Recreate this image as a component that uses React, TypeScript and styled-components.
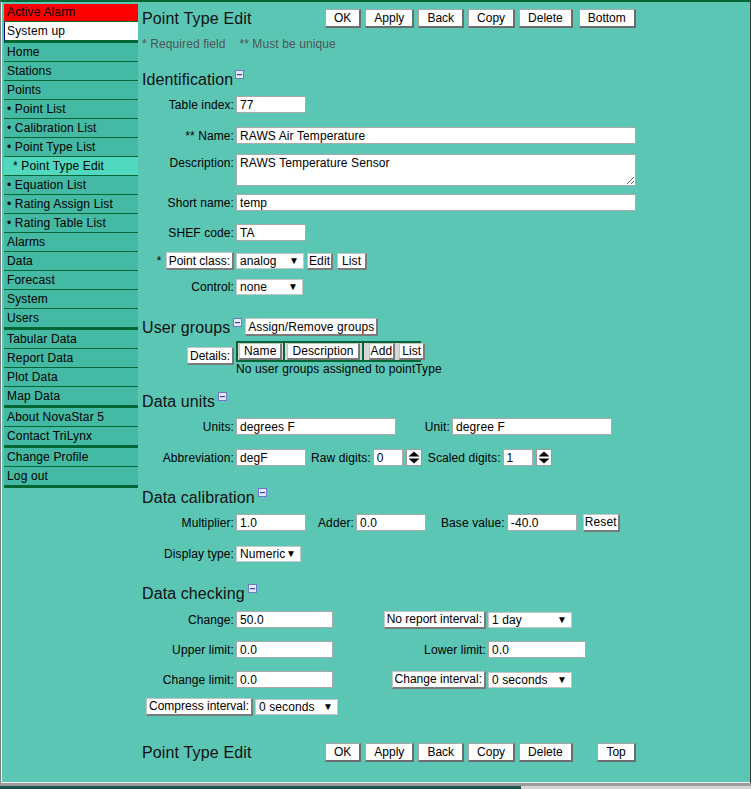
import React from "react";
import styled, { createGlobalStyle } from "styled-components";

const C = {
  main: "#5cc6b5",
  side: "#44b9a3",
  hi: "#50d9be",
  dark: "#006633",
};

const Global = createGlobalStyle`
  html, body { margin: 0; padding: 0; background: #1d4f4c; }
  body { font-family: "Liberation Sans", Arial, sans-serif; font-size: 12px; color: #000; }
  * { box-sizing: border-box; }
`;

const Screen = styled.div`
  width: 751px;
  height: 789px;
  display: flex;
  flex-direction: column;
  overflow: hidden;
`;

const Frame = styled.div`
  width: 751px;
  height: 783px;
  flex-shrink: 0;
  background: ${C.main};
  border-top: 2px solid ${C.dark};
  border-left: 1px solid #7d7d7d;
  border-right: 1px solid #3d3d3d;
  box-shadow: inset 1px 0 0 #f2f2f2, inset 0 -1px 0 #f0f0f0;
  padding: 2px 0 0 3px;
  display: flex;
  align-items: flex-start;
`;

const ScrollBar = styled.div`
  height: 6px;
  border-top: 3px solid #9b9b9b;
  display: flex;
`;

const ScrollThumb = styled.div`
  width: 521px;
  background: #1e5350;
`;

const ScrollTrack = styled.div`
  flex: 1;
  background: #d4d4d4;
`;

/* ---------- Sidebar ---------- */

const Sidebar = styled.nav`
  width: 134px;
  flex-shrink: 0;
  display: flex;
  flex-direction: column;
`;

const AlarmBox = styled.div`
  height: 18px;
  line-height: 17px;
  background: #ff0000;
  border-bottom: 1px solid ${C.dark};
  padding-left: 3px;
  letter-spacing: 0.15px;
`;

const StatusBox = styled.div`
  height: 21px;
  line-height: 18px;
  background: #ffffff;
  border-left: 1px solid #00007a;
  border-bottom: 3px solid ${C.dark};
  padding-left: 2px;
  letter-spacing: 0.15px;
`;

const NavItem = styled.div<{ $thick?: boolean; $active?: boolean; $indent?: number }>`
  height: ${(p) => (p.$thick ? 21 : 19)}px;
  line-height: 18px;
  padding-left: ${(p) => 3 + (p.$indent ?? 0)}px;
  background: ${(p) => (p.$active ? C.hi : C.side)};
  border-bottom: ${(p) => (p.$thick ? 3 : 1)}px solid ${C.dark};
  white-space: nowrap;
  letter-spacing: 0.15px;
`;

/* ---------- Main ---------- */

const Main = styled.main`
  flex: 1;
  padding-left: 4px;
  display: flex;
  flex-direction: column;
  letter-spacing: 0.1px;
`;

const TitleBar = styled.div<{ $mt: number }>`
  display: flex;
  align-items: center;
  height: 19px;
  margin-top: ${(p) => p.$mt}px;
`;

const Title = styled.div`
  width: 183px;
  font-size: 16px;
  line-height: 19px;
  letter-spacing: 0.15px;
  color: #111;
`;

const BtnGroup = styled.div`
  display: flex;
  gap: 4px;
`;

const EndCell = styled.div`
  width: 63px;
  display: flex;
  justify-content: flex-end;
`;

const Btn = styled.button`
  height: 19px;
  margin: 0;
  padding: 0 8px;
  background: #fff;
  border-style: solid;
  border-width: 1px 2px 2px 1px;
  border-color: #a8a8a8 #6c6c6c #6c6c6c #a8a8a8;
  font-family: inherit;
  font-size: 12px;
  letter-spacing: 0;
  color: #000;
  line-height: 1;
`;

const SmallBtn = styled.button<{ $px?: number; $h?: number }>`
  height: ${(p) => p.$h ?? 17}px;
  margin: 0;
  padding: 0 ${(p) => p.$px ?? 1}px;
  background: #fff;
  border-style: solid;
  border-width: 1px 2px 2px 1px;
  border-color: #c4c4c4 #7a7a7a #7a7a7a #c4c4c4;
  font-family: inherit;
  font-size: 12px;
  letter-spacing: 0.1px;
  color: #000;
  line-height: 1;
  white-space: nowrap;
`;

const LabelBox = styled.span<{ $h?: number }>`
  display: inline-flex;
  align-items: center;
  height: ${(p) => p.$h ?? 18}px;
  padding: 0 2px 0 2px;
  background: #fff;
  border-style: solid;
  border-width: 1px 2px 2px 1px;
  border-color: #c4c4c4 #7a7a7a #7a7a7a #c4c4c4;
  letter-spacing: 0;
  white-space: nowrap;
`;

const Notes = styled.div<{ $mt: number }>`
  margin-top: ${(p) => p.$mt}px;
  line-height: 14px;
  color: #4e5553;
  white-space: pre;
`;

const Heading = styled.h2<{ $mt: number }>`
  margin: ${(p) => p.$mt}px 0 0 0;
  height: 19px;
  display: flex;
  align-items: flex-start;
  font-size: 16px;
  font-weight: normal;
  line-height: 19px;
  color: #111;
`;

const ToggleSvg = styled.svg<{ $ml?: number }>`
  margin-left: ${(p) => p.$ml ?? 2}px;
  margin-top: 0px;
  flex-shrink: 0;
`;

const Row = styled.div<{ $mt: number; $h?: number; $align?: string }>`
  display: flex;
  align-items: ${(p) => p.$align ?? "center"};
  margin-top: ${(p) => p.$mt}px;
  height: ${(p) => p.$h ?? 19}px;
`;

const Label = styled.div<{ $w?: number; $pt?: number }>`
  width: ${(p) => p.$w ?? 92}px;
  flex-shrink: 0;
  display: flex;
  justify-content: flex-end;
  align-items: center;
  gap: 4px;
  margin-right: 2px;
  padding-top: ${(p) => p.$pt ?? 0}px;
  white-space: nowrap;
`;

const InlineLabel = styled.span<{ $ml: number }>`
  margin-left: ${(p) => p.$ml}px;
  margin-right: 2px;
  white-space: nowrap;
`;

const TextInput = styled.input<{ $w: number; $ml?: number }>`
  width: ${(p) => p.$w}px;
  height: 17px;
  margin: 0 0 0 ${(p) => p.$ml ?? 0}px;
  padding: 0 0 0 3px;
  border: 1px solid #a9a9a9;
  background: #fff;
  font-family: inherit;
  font-size: 12px;
  letter-spacing: 0.1px;
  color: #000;
  outline: none;
`;

const TextArea = styled.textarea`
  width: 400px;
  height: 32px;
  margin: 0;
  padding: 1px 3px;
  border: 1px solid #a9a9a9;
  background: #fff;
  font-family: inherit;
  font-size: 12px;
  letter-spacing: 0.1px;
  line-height: 14px;
  color: #000;
  outline: none;
`;

const FakeSelect = styled.div<{ $w: number; $ml?: number }>`
  width: ${(p) => p.$w}px;
  height: 16px;
  margin-left: ${(p) => p.$ml ?? 0}px;
  background: #fff;
  border: 1px solid #c6c6c6;
  display: flex;
  align-items: center;
  justify-content: space-between;
  padding: 0 4px 0 3px;
  white-space: nowrap;
`;

const Arrow = styled.span`
  font-size: 10px;
  line-height: 1;
`;

const SpinSvg = styled.svg<{ $ml: number }>`
  margin-left: ${(p) => p.$ml}px;
  flex-shrink: 0;
`;

const Stack = styled.div`
  display: flex;
  flex-direction: column;
`;

const GroupTable = styled.div`
  display: flex;
  align-items: stretch;
  width: 185px;
  height: 21px;
  border: 2px solid ${C.dark};
  background: #d6d6d6;
`;

const GroupCell = styled.div<{ $px: number; $sep?: boolean; $gap?: number }>`
  display: flex;
  align-items: flex-start;
  gap: ${(p) => p.$gap ?? 0}px;
  padding: 0 ${(p) => p.$px}px;
  border-right: ${(p) => (p.$sep ? `2px solid ${C.dark}` : "none")};
`;

const HeadBox = styled.span<{ $px: number }>`
  display: inline-flex;
  align-items: center;
  height: 17px;
  padding: 0 ${(p) => p.$px}px;
  background: #fff;
  border-style: solid;
  border-width: 1px 2px 2px 1px;
  border-color: #c4c4c4 #7a7a7a #7a7a7a #c4c4c4;
  white-space: nowrap;
`;

const EmptyText = styled.div`
  line-height: 15px;
`;

const Indent = styled.div`
  margin-left: 4px;
  margin-right: 2px;
`;

/* ---------- helpers ---------- */

const Toggle = ({ ml }: { ml?: number }) => (
  <ToggleSvg $ml={ml} width="9" height="9" viewBox="0 0 9 9">
    <rect x="0.5" y="0.5" width="8" height="8" fill="#e6e9fb" stroke="#6e78c8" />
    <rect x="2" y="4" width="5" height="1.2" fill="#3b47a6" />
  </ToggleSvg>
);

const Spinner = ({ ml }: { ml: number }) => (
  <SpinSvg $ml={ml} width="16" height="17" viewBox="0 0 16 17">
    <rect x="0.5" y="0.5" width="15" height="16" fill="#fff" stroke="#9a9a9a" />
    <path d="M2.5 7.5 L8 2.5 L13.5 7.5 Z" fill="#000" />
    <path d="M2.5 9.5 L8 14.5 L13.5 9.5 Z" fill="#000" />
  </SpinSvg>
);

const Select = ({ w, ml, children }: { w: number; ml?: number; children: React.ReactNode }) => (
  <FakeSelect $w={w} $ml={ml}>
    <span>{children}</span>
    <Arrow>▼</Arrow>
  </FakeSelect>
);

const Field = ({ w, value, ml }: { w: number; value: string; ml?: number }) => (
  <TextInput $w={w} $ml={ml} readOnly value={value} />
);

const navItems: { label: string; indent?: number; active?: boolean; thick?: boolean }[] = [
  { label: "Home" },
  { label: "Stations" },
  { label: "Points" },
  { label: "• Point List" },
  { label: "• Calibration List" },
  { label: "• Point Type List" },
  { label: "* Point Type Edit", indent: 6, active: true },
  { label: "• Equation List" },
  { label: "• Rating Assign List" },
  { label: "• Rating Table List" },
  { label: "Alarms" },
  { label: "Data" },
  { label: "Forecast" },
  { label: "System" },
  { label: "Users", thick: true },
  { label: "Tabular Data" },
  { label: "Report Data" },
  { label: "Plot Data" },
  { label: "Map Data", thick: true },
  { label: "About NovaStar 5" },
  { label: "Contact TriLynx", thick: true },
  { label: "Change Profile" },
  { label: "Log out", thick: true },
];

const ActionButtons = ({ last, mt }: { last: string; mt: number }) => (
  <TitleBar $mt={mt}>
    <Title>Point Type Edit</Title>
    <BtnGroup>
      <Btn>OK</Btn>
      <Btn>Apply</Btn>
      <Btn>Back</Btn>
      <Btn>Copy</Btn>
      <Btn>Delete</Btn>
    </BtnGroup>
    <EndCell>
      <Btn>{last}</Btn>
    </EndCell>
  </TitleBar>
);

export default function App() {
  return (
    <Screen>
      <Global />
      <Frame>
        <Sidebar>
          <AlarmBox>Active Alarm</AlarmBox>
          <StatusBox>System up</StatusBox>
          {navItems.map((n) => (
            <NavItem key={n.label} $indent={n.indent} $active={n.active} $thick={n.thick}>
              {n.label}
            </NavItem>
          ))}
        </Sidebar>

        <Main>
          <ActionButtons last="Bottom" mt={5} />
          <Notes $mt={9}>{"* Required field    ** Must be unique"}</Notes>

          <Heading $mt={19}>
            Identification
            <Toggle />
          </Heading>
          <Row $mt={6}>
            <Label>Table index:</Label>
            <Field w={70} value="77" />
          </Row>
          <Row $mt={12}>
            <Label>** Name:</Label>
            <Field w={400} value="RAWS Air Temperature" />
          </Row>
          <Row $mt={9} $h={32} $align="flex-start">
            <Label $pt={2}>Description:</Label>
            <TextArea readOnly value="RAWS Temperature Sensor" />
          </Row>
          <Row $mt={7}>
            <Label>Short name:</Label>
            <Field w={400} value="temp" />
          </Row>
          <Row $mt={11}>
            <Label>SHEF code:</Label>
            <Field w={70} value="TA" />
          </Row>
          <Row $mt={10} $h={18}>
            <Label>
              <span>*</span>
              <LabelBox>Point class:</LabelBox>
            </Label>
            <Select w={68}>analog</Select>
            <SmallBtn $px={1} style={{ marginLeft: 3 }}>Edit</SmallBtn>
            <SmallBtn $px={4} style={{ marginLeft: 4 }}>List</SmallBtn>
          </Row>
          <Row $mt={8} $h={18}>
            <Label>Control:</Label>
            <Select w={67}>none</Select>
          </Row>

          <Heading $mt={22}>
            User groups
            <Toggle ml={3} />
            <SmallBtn $px={2} $h={18} style={{ marginLeft: 3 }}>Assign/Remove groups</SmallBtn>
          </Heading>
          <Row $mt={4} $h={36} $align="flex-start">
            <Label $pt={6}>
              <LabelBox>Details:</LabelBox>
            </Label>
            <Stack>
              <GroupTable>
                <GroupCell $px={1} $sep>
                  <HeadBox $px={4}>Name</HeadBox>
                </GroupCell>
                <GroupCell $px={2} $sep>
                  <HeadBox $px={4}>Description</HeadBox>
                </GroupCell>
                <GroupCell $px={5} $gap={4}>
                  <SmallBtn $px={1}>Add</SmallBtn>
                  <SmallBtn $px={2}>List</SmallBtn>
                </GroupCell>
              </GroupTable>
              <EmptyText>No user groups assigned to pointType</EmptyText>
            </Stack>
          </Row>

          <Heading $mt={15}>
            Data units
            <Toggle ml={3} />
          </Heading>
          <Row $mt={6}>
            <Label>Units:</Label>
            <Field w={160} value="degrees F" />
            <Label $w={54}>Unit:</Label>
            <Field w={160} value="degree F" />
          </Row>
          <Row $mt={12}>
            <Label>Abbreviation:</Label>
            <Field w={70} value="degF" />
            <InlineLabel $ml={5}>Raw digits:</InlineLabel>
            <Field w={30} value="0" />
            <Spinner ml={3} />
            <InlineLabel $ml={6}>Scaled digits:</InlineLabel>
            <Field w={30} value="1" />
            <Spinner ml={3} />
          </Row>

          <Heading $mt={21}>
            Data calibration
            <Toggle ml={3} />
          </Heading>
          <Row $mt={6}>
            <Label>Multiplier:</Label>
            <Field w={70} value="1.0" />
            <InlineLabel $ml={12}>Adder:</InlineLabel>
            <Field w={70} value="0.0" />
            <InlineLabel $ml={15}>Base value:</InlineLabel>
            <Field w={70} value="-40.0" />
            <SmallBtn $px={1} $h={18} style={{ marginLeft: 6 }}>Reset</SmallBtn>
          </Row>
          <Row $mt={13} $h={18}>
            <Label>Display type:</Label>
            <Select w={65}>Numeric</Select>
          </Row>

          <Heading $mt={21}>
            Data checking
            <Toggle ml={3} />
          </Heading>
          <Row $mt={7}>
            <Label>Change:</Label>
            <Field w={97} value="50.0" />
            <Label $w={153}>
              <LabelBox>No report interval:</LabelBox>
            </Label>
            <Select w={84}>1 day</Select>
          </Row>
          <Row $mt={11}>
            <Label>Upper limit:</Label>
            <Field w={97} value="0.0" />
            <Label $w={153}>Lower limit:</Label>
            <Field w={98} value="0.0" />
          </Row>
          <Row $mt={11}>
            <Label>Change limit:</Label>
            <Field w={97} value="0.0" />
            <Label $w={153}>
              <LabelBox>Change interval:</LabelBox>
            </Label>
            <Select w={84}>0 seconds</Select>
          </Row>
          <Row $mt={8}>
            <Indent>
              <LabelBox>Compress interval:</LabelBox>
            </Indent>
            <Select w={83}>0 seconds</Select>
          </Row>

          <ActionButtons last="Top" mt={27} />
        </Main>
      </Frame>
      <ScrollBar>
        <ScrollThumb />
        <ScrollTrack />
      </ScrollBar>
    </Screen>
  );
}
